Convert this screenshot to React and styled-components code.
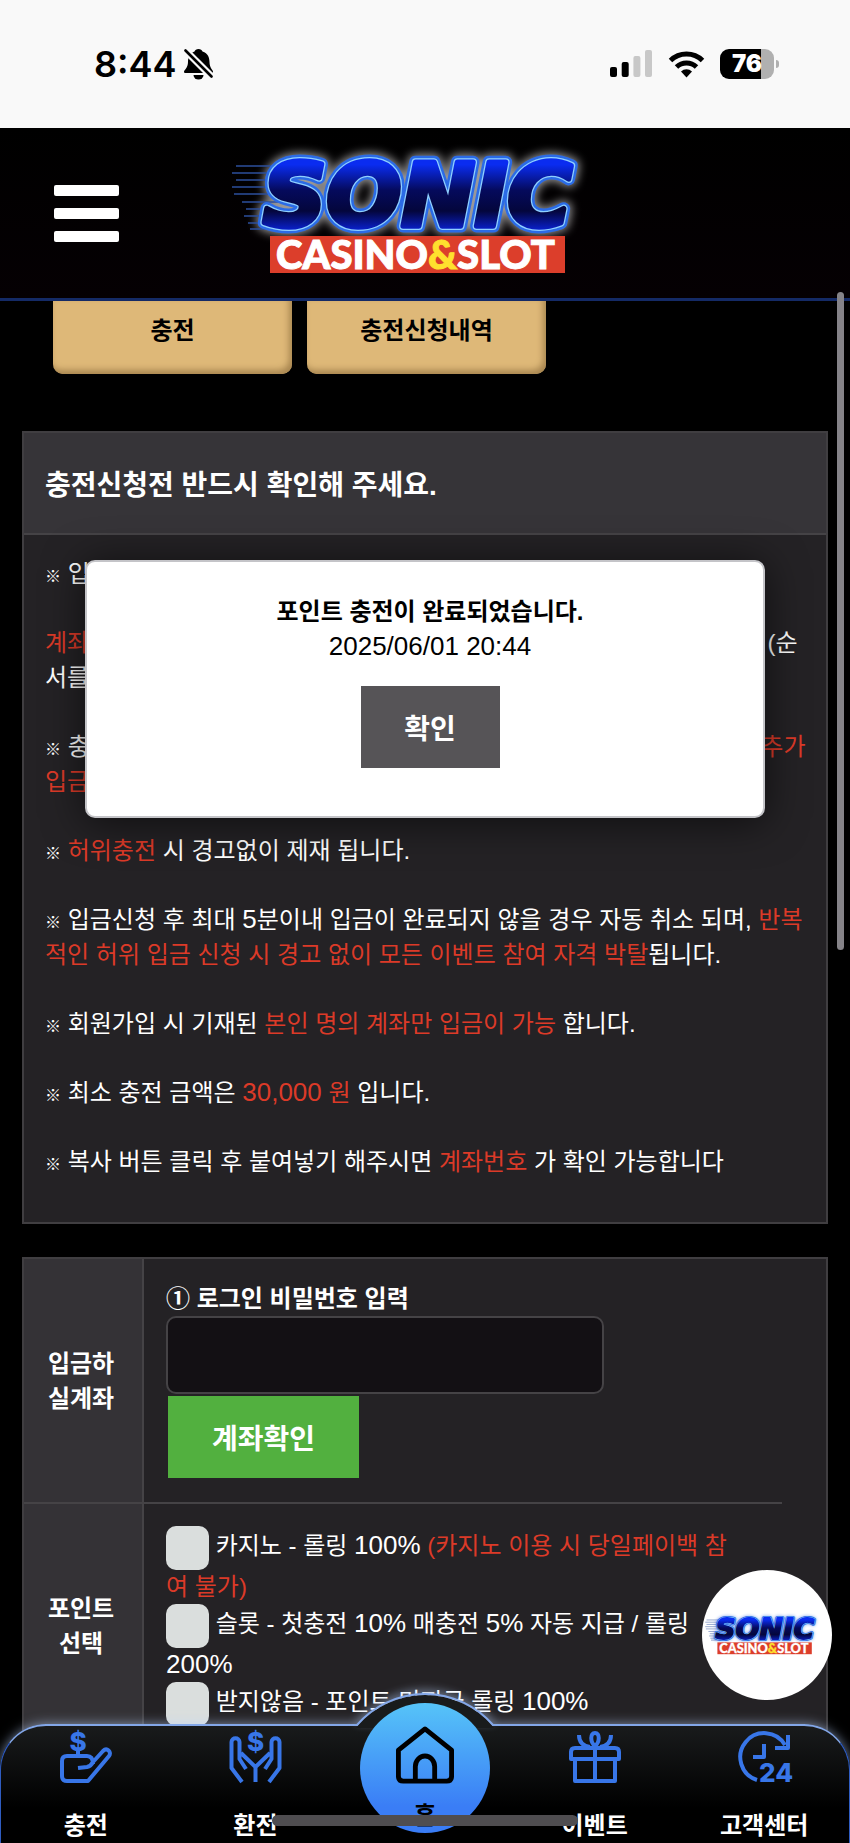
import React from "react"
import styled, { createGlobalStyle } from "styled-components"

const App = () => (
  <Shell>
    <GlobalStyle />
    <StatusBar />
    <Header>
      <MenuButton type="button" aria-label="메뉴">
        <span />
        <span />
        <span />
      </MenuButton>
      <Logo id="header" width="400" height="168" glow="#ffffff" />
    </Header>

    <Content>
      <Tabs>
        <TabButton type="button">충전</TabButton>
        <TabButton type="button">충전신청내역</TabButton>
      </Tabs>

      <Notice>
        <NoticeTitle>충전신청전 반드시 확인해 주세요.</NoticeTitle>
        <NoticeBody>
          <p>
            <Mark>※</Mark> 입금 계좌는 수시로 변경되고 있습니다.
          </p>
          <p>
            <Red>계좌확인</Red> 후 먼저 입금하신 다음에 충전신청을 진행하여
            주시기 바랍니다 (순서를 꼭 지켜주세요)
          </p>
          <p>
            <Mark>※</Mark> 충전신청 완료 이후에는 반드시 신청하신 금액으로
            정확하게 <Red>입금하고 추가입금 시 다시 신청</Red> 바랍니다.
          </p>
          <p>
            <Mark>※</Mark> <Red>허위충전</Red> 시 경고없이 제재 됩니다.
          </p>
          <p>
            <Mark>※</Mark> 입금신청 후 최대 <Num>5</Num>분이내 입금이 완료되지
            않을 경우 자동 취소 되며,{" "}
            <Red>
              반복적인 허위 입금 신청 시 경고 없이 모든 이벤트 참여 자격 박탈
            </Red>
            됩니다.
          </p>
          <p>
            <Mark>※</Mark> 회원가입 시 기재된{" "}
            <Red>본인 명의 계좌만 입금이 가능</Red> 합니다.
          </p>
          <p>
            <Mark>※</Mark> 최소 충전 금액은{" "}
            <Red>
              <Num>30,000</Num> 원
            </Red>{" "}
            입니다.
          </p>
          <p>
            <Mark>※</Mark> 복사 버튼 클릭 후 붙여넣기 해주시면{" "}
            <Red>계좌번호</Red> 가 확인 가능합니다
          </p>
        </NoticeBody>
      </Notice>

      <FormPanel>
        <FormTable>
          <tbody>
            <tr>
              <th scope="row">입금하실계좌</th>
              <td>
                <FieldLabel htmlFor="password">① 로그인 비밀번호 입력</FieldLabel>
                <PasswordInput id="password" type="password" />
                <CheckButton type="button">계좌확인</CheckButton>
              </td>
            </tr>
            <tr>
              <th scope="row">포인트 선택</th>
              <td>
                <Option>
                  <Checkbox type="checkbox" /> 카지노 - 롤링 <Num>100%</Num>{" "}
                  <Red>(카지노 이용 시 당일페이백 참여 불가)</Red>
                </Option>
                <Option>
                  <Checkbox type="checkbox" /> 슬롯 - 첫충전 <Num>10%</Num>{" "}
                  매충전 <Num>5%</Num> 자동 지급 / 롤링 <Num>200%</Num>
                </Option>
                <Option>
                  <Checkbox type="checkbox" /> 받지않음 - 포인트 미지급 롤링{" "}
                  <Num>100%</Num>
                </Option>
              </td>
            </tr>
          </tbody>
        </FormTable>
      </FormPanel>
    </Content>

    <Modal role="alertdialog" aria-labelledby="modal_title">
      <h2 id="modal_title">포인트 충전이 완료되었습니다.</h2>
      <p>
        <Num>2025/06/01 20:44</Num>
      </p>
      <ConfirmButton type="button">확인</ConfirmButton>
    </Modal>

    <SupportLink href="#support" aria-label="SONIC CASINO & SLOT">
      <Logo id="support" width="128" height="54" glow="#5f8fe8" />
    </SupportLink>
    <ScrollThumb />
    <BottomNav />
    <HomeIndicator />
  </Shell>
)
export default App

const StatusBar = () => (
  <Status>
    <Clock>
      8:44
      <svg width="30" height="32" viewBox="0 0 30 32">
        <path d="M14.500 1c2 0 3.500 1 4 2.500C24 5 25.500 10 25.500 14c0 6 3.500 8 3.500 9.500 0 1-.5 1.500-1.500 1.500h-26C.5 25 0 24.500 0 23.500 0 22 4 20 4 14c0-5 2-9 6.500-10.500C11 2 12.500 1 14.500 1z" />
        <path d="M9.500 27h10a5 4.500 0 0 1-10 0z" />
        <path d="M1 2l27 27" stroke="#f9f9f9" strokeWidth="7" />
        <path d="M1.500 2.500l26 26" stroke="#000" strokeWidth="2.600" strokeLinecap="round" />
      </svg>
    </Clock>
    <StatusIcons>
      <svg width="43" height="28" viewBox="0 0 43 28">
        <rect x="0" y="17" width="7" height="10" rx="2" />
        <rect x="11.700" y="12" width="7" height="15" rx="2" />
        <rect x="23.400" y="6" width="7" height="21" rx="2" fill="#c8c8c8" />
        <rect x="35" y="0" width="7" height="27" rx="2" fill="#c8c8c8" />
      </svg>
      <svg width="37" height="27" viewBox="0 0 37 27" fill="none" stroke="#000">
        <path d="M2.500 9.500a23 23 0 0 1 32 0" strokeWidth="5" />
        <path d="M8.500 16a14.500 14.500 0 0 1 20 0" strokeWidth="5" />
        <path d="M13 20.500a8 8 0 0 1 11 0L18.500 26.500z" fill="#000" stroke="none" />
      </svg>
      <Battery>
        <b>76</b>
      </Battery>
    </StatusIcons>
  </Status>
)

const Logo = ({ id, glow, ...size }) => (
  <svg viewBox="5 0 400 168" {...size} aria-hidden="true">
    <defs>
      <linearGradient id={`${id}_fill`} x1="0" y1="0" x2="0" y2="1">
        <stop offset="0.200" stopColor="#0a2cf0" />
        <stop offset="0.450" stopColor="#050a5c" />
        <stop offset="0.650" stopColor="#04063c" />
        <stop offset="0.850" stopColor="#0a22d8" />
      </linearGradient>
      <filter id={`${id}_blur`} x="-20%" y="-40%" width="140%" height="180%">
        <feGaussianBlur stdDeviation="5" />
      </filter>
    </defs>
    <SonicText
      x="43"
      y="97"
      fill={glow}
      stroke={glow}
      strokeWidth="16"
      opacity="0.600"
      filter={`url(#${id}_blur)`}
    >
      SONIC
    </SonicText>
    <g stroke="#2c4f9c" strokeWidth="1.500">
      <path d="M16 37H60M12 44H60M16 51H60M12 58H60M14 65H60M22 73H60M26 80H60M24 87H60M28 94H60M30 100H60" />
    </g>
    <SonicText x="43" y="97" fill="#2b6be6" stroke="#2b6be6" strokeWidth="13">
      SONIC
    </SonicText>
    <SonicText x="43" y="97" fill="#8fd0ff" stroke="#8fd0ff" strokeWidth="8">
      SONIC
    </SonicText>
    <SonicText
      x="43"
      y="97"
      fill={`url(#${id}_fill)`}
      stroke={`url(#${id}_fill)`}
      strokeWidth="5.500"
    >
      SONIC
    </SonicText>
    <rect x="50" y="107" width="295" height="37" fill="#dc3e2b" />
    <SlotText x="56" y="140">
      CASINO<tspan fill="#ffe02e" stroke="#ffe02e">&amp;</tspan>SLOT
    </SlotText>
  </svg>
)

const BottomNav = () => (
  <Nav>
    <Arch width="142" height="36" viewBox="0 0 142 36" aria-hidden="true">
      <path d="M2 36L4 33A90 90 0 0 1 138 33L140 36z" fill="#191b1c" />
      <path d="M0 33H3A90 90 0 0 1 139 33H142" fill="none" stroke="#83a7e8" strokeWidth="2" />
    </Arch>
    <NavLink href="#charge">
      <NavIcon viewBox="0 0 52 52">
        <path d="M18 19v6M33 33c0-5-2-8-6-8H7q-5 0-5 5v15q0 5 5 5h21L49 25c3-4-2-9-6-5L33 31q-2 4-6 5l-9 1" />
        <text x="18" y="20" textAnchor="middle">
          $
        </text>
      </NavIcon>
      충전
    </NavLink>
    <NavLink href="#exchange">
      <NavIcon viewBox="0 0 52 52">
        <path d="M13 51L2.500 37V11c0-5 8-5 8 0v17L17 38M12 22L26.500 36 41 22M26.500 36v15M40 51l10.500-14V11c0-5-8-5-8 0v17L36 38" />
        <text x="26.500" y="20" textAnchor="middle">
          $
        </text>
      </NavIcon>
      환전
    </NavLink>
    <HomeLink href="#home">
      <svg width="60" height="60" viewBox="0 0 60 60" fill="none" stroke="#000" strokeWidth="5" strokeLinejoin="round">
        <path d="M30 3L57.500 25V52q0 5-5 5H7.500q-5 0-5-5V25z" />
        <path d="M20 57V42a10 11 0 0 1 20 0V57" />
      </svg>
      홈
    </HomeLink>
    <NavLink href="#event">
      <NavIcon viewBox="0 0 52 52">
        <path d="M2 28V21q0-4 4-4h40q4 0 4 4v7zM6 28v22h40V28M26 17v33M26 15c-5-4-5-13 0-13s5 9 0 13M10 4c0 7 4 11 11 12M42 4c0 7-4 11-11 12" />
      </NavIcon>
      이벤트
    </NavLink>
    <NavLink href="#support">
      <NavIcon viewBox="0 0 52 52">
        <path d="M19 49A24 24 0 1 1 47 14M50 4v13H37M26 13v13H15" />
        <text x="38" y="51" textAnchor="middle">
          24
        </text>
      </NavIcon>
      고객센터
    </NavLink>
  </Nav>
)

//styled-components
const GlobalStyle = createGlobalStyle`
  * {
    box-sizing: border-box;
  }

  body {
    margin: 0;
    background: #000;
  }

  button, input {
    font-family: inherit;
  }
`
const Shell = styled.div`
  position: relative;
  height: 100vh;
  overflow: hidden;
  background: #000;
  color: #fff;
  font-family: "Liberation Sans", "Noto Sans CJK KR", sans-serif;
  font-size: 24px;
  line-height: 35px;
`
const Status = styled.div`
  display: flex;
  justify-content: space-between;
  align-items: center;
  height: 128px;
  padding: 0 76px 0 94px;
  background: #f9f9f9;
  color: #000;
`
const Clock = styled.div`
  display: flex;
  align-items: center;
  gap: 8px;
  font: 600 36px Inter, sans-serif;
`
const StatusIcons = styled.div`
  display: flex;
  align-items: center;
  gap: 15px;
`
const Battery = styled.div`
  position: relative;
  width: 54px;
  height: 30px;
  border-radius: 9px;
  background: linear-gradient(90deg, #000 76%, #b0b0b0 76%);
  color: #fff;
  font: 700 24px/30px Inter, sans-serif;
  text-align: center;

  &::after {
    content: "";
    position: absolute;
    right: -5px;
    top: 11px;
    width: 3px;
    height: 8px;
    border-radius: 0 4px 4px 0;
    background: #b0b0b0;
  }
`
const Header = styled.header`
  display: grid;
  grid-template-columns: 1fr auto 1fr;
  align-items: center;
  height: 173px;
  padding: 0 54px;
  border-bottom: 3px solid #142a66;
  background: linear-gradient(#000, #050003);

  svg {
    display: block;
  }
`
const MenuButton = styled.button`
  display: flex;
  flex-direction: column;
  gap: 12px;
  width: 65px;
  padding: 0;
  border: 0;
  background: none;

  span {
    height: 11px;
    border-radius: 2px;
    background: #fff;
  }
`
const SonicText = styled.text`
  font: italic 700 88px "DejaVu Sans", sans-serif;
  stroke-linejoin: round;
`
const SlotText = styled.text`
  fill: #fff;
  stroke: #fff;
  stroke-width: 1px;
  font: 900 40px Lato, sans-serif;
`
const Content = styled.main`
  padding: 0 22px;
`
const Tabs = styled.div`
  display: flex;
  gap: 15px;
  padding: 0 31px;
`
const TabButton = styled.button`
  width: 239px;
  height: 73px;
  padding: 0 0 18px;
  border: 0;
  border-radius: 0 0 10px 10px;
  background: #deb878;
  box-shadow: inset -3px -4px 6px #a88650;
  color: #000;
  font-size: 24px;
  font-weight: 700;
`
const Notice = styled.section`
  margin-top: 57px;
  border: 2px solid #403e41;
  background: #242225;
`
const NoticeTitle = styled.h1`
  margin: 0;
  padding: 35px 21px 30px;
  border-bottom: 2px solid #454346;
  background: #363438;
  font-size: 28px;
  font-weight: 700;
`
const NoticeBody = styled.div`
  padding: 21px 12px 43px 21px;

  p {
    margin: 0 0 34px;
  }

  p:last-child {
    margin: 0;
  }
`
const Mark = styled.span`
  font-size: 16px;
  font-weight: 700;
  line-height: 1;
`
const Num = styled.span`
  font-size: 26px;
  line-height: 1;
`
const Red = styled.span`
  color: #dc3a28;
`
const FormPanel = styled.section`
  margin-top: 33px;
  padding-right: 44px;
  border: 2px solid #403e41;
  background: #242225;
`
const FormTable = styled.table`
  width: 100%;
  border-collapse: collapse;

  th {
    width: 119px;
    padding: 0 24px 0 20px;
    border-right: 2px solid #454346;
    background: #343236;
    text-align: center;
    word-break: break-all;
  }

  td {
    padding: 22px 38px 22px 22px;
  }

  tr + tr > * {
    border-top: 2px solid #454346;
  }
`
const FieldLabel = styled.label`
  display: block;
  font-weight: 700;
`
const PasswordInput = styled.input`
  display: block;
  width: 438px;
  max-width: 100%;
  height: 78px;
  padding: 0 16px;
  border: 2px solid #454346;
  border-radius: 10px;
  background: #131014;
  color: #fff;
  font-size: 24px;
`
const ActionButton = styled.button`
  display: block;
  height: 82px;
  border: 0;
  color: #fff;
  font-size: 28px;
  font-weight: 700;
`
const CheckButton = styled(ActionButton)`
  width: 191px;
  margin: 2px;
  background: #52b03f;
`
const ConfirmButton = styled(ActionButton)`
  width: 139px;
  margin: 22px auto 0;
  background: #565457;
`
const Option = styled.label`
  display: block;
  line-height: 34px;
`
const Checkbox = styled.input`
  appearance: none;
  width: 43px;
  height: 44px;
  margin: 0;
  border-radius: 10px;
  background: #dadedd;
  vertical-align: middle;
`
const Modal = styled.div`
  position: absolute;
  top: 560px;
  left: 10%;
  right: 10%;
  padding: 32px 0 48px 10px;
  border: 2px solid #c4c4c8;
  border-radius: 10px;
  background: #fff;
  box-shadow: 0 4px 40px rgba(0, 0, 0, 0.6);
  color: #000;
  text-align: center;

  h2,
  p {
    margin: 0;
    font-size: 24px;
  }
`
const SupportLink = styled.a`
  position: absolute;
  right: 18px;
  bottom: 143px;
  display: flex;
  align-items: center;
  justify-content: center;
  width: 130px;
  height: 130px;
  border-radius: 50%;
  background: #fff;
`
const ScrollThumb = styled.div`
  position: absolute;
  top: 292px;
  right: 6px;
  width: 7px;
  height: 658px;
  border-radius: 4px;
  background: #858388;
`
const Nav = styled.nav`
  position: absolute;
  left: 0;
  right: 0;
  bottom: 0;
  display: grid;
  grid-template-columns: repeat(5, 1fr);
  height: 119px;
  border: solid #2f5cc0;
  border-width: 2px 1px 0;
  border-top-color: #83a7e8;
  border-radius: 46px 46px 0 0;
  background: linear-gradient(#191b1c, #000 70%);
  box-shadow: 0 0 12px rgba(190, 215, 255, 0.6);
`
const Arch = styled.svg`
  position: absolute;
  left: calc(50% - 71px);
  top: -34px;
  filter: drop-shadow(0 -4px 4px rgba(190, 215, 255, 0.4));
`
const NavLink = styled.a`
  display: flex;
  flex-direction: column;
  align-items: center;
  gap: 25px;
  padding-top: 5px;
  color: #fff;
  font-weight: 700;
  text-decoration: none;
`
const NavIcon = styled.svg`
  width: 52px;
  height: 52px;
  overflow: visible;
  fill: none;
  stroke: #3876e8;
  stroke-width: 4px;
  stroke-linejoin: round;

  text {
    fill: #3876e8;
    stroke: none;
    font: 800 26px Inter, sans-serif;
  }
`
const HomeLink = styled.a`
  position: relative;
  display: flex;
  flex-direction: column;
  align-items: center;
  gap: 14px;
  justify-self: center;
  width: 130px;
  height: 130px;
  margin-top: -23px;
  padding-top: 23px;
  border-radius: 50%;
  background: linear-gradient(#56c4f8, #3a7df6 80%);
  color: #000;
  font-weight: 700;
  text-decoration: none;
`
const HomeIndicator = styled.div`
  position: absolute;
  left: 32%;
  right: 32%;
  bottom: 17px;
  height: 11px;
  border-radius: 6px;
  background: #4f4d50;
`
